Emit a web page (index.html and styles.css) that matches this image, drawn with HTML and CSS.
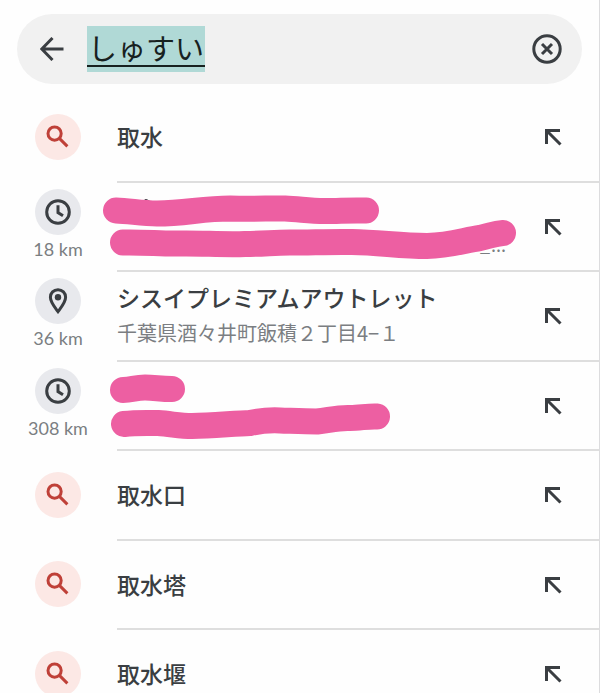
FILE: index.html
```
<!DOCTYPE html>
<html lang="ja">
<head>
<meta charset="UTF-8" />
<meta name="viewport" content="width=device-width, initial-scale=1" />
<title>しゅすい</title>
<link rel="stylesheet" href="styles.css">
</head>
<body>

<!-- shared icons -->
<svg class="sprite" aria-hidden="true">
  <symbol id="icon-search" viewBox="0 0 24 24">
    <circle cx="8.6" cy="8.6" r="6.6" />
    <path d="M13.4 13.4 L21.4 21.4" />
  </symbol>
  <symbol id="icon-clock" viewBox="0 0 26 26">
    <circle cx="13" cy="13" r="11.3" />
    <path d="M13 6.2 V13.6 L18 16.8" />
  </symbol>
  <symbol id="icon-pin" viewBox="0 0 26 26">
    <path d="M13 1.8 C8.6 1.8 5.4 5 5.4 9.3 C5.4 14.4 9.6 19 13 23.6 C16.4 19 20.6 14.4 20.6 9.3 C20.6 5 17.4 1.8 13 1.8 Z" />
    <circle class="dot" cx="13" cy="9.3" r="3.2" />
  </symbol>
  <symbol id="icon-fill" viewBox="0 0 18 18">
    <path d="M16 2.5 H2.5 V16 M2.5 2.5 L16.5 16.5" />
  </symbol>
</svg>

<header>
  <form class="search-bar">
    <button type="button" class="icon-btn" aria-label="戻る">
      <svg width="24" height="24" viewBox="0 0 24 24"><path d="M23.5 12 H2 M12.5 1 L1.8 12 L12.5 23" /></svg>
    </button>
    <div class="search-field">
      <input type="text" class="query" value="しゅすい" aria-label="検索" />
    </div>
    <button type="reset" class="icon-btn" aria-label="クリア">
      <svg width="30" height="30" viewBox="0 0 30 30"><circle cx="15" cy="15" r="13.2" /><path d="M10 10 L20 20 M20 10 L10 20" /></svg>
    </button>
  </form>
</header>

<main>
  <ul class="results">
    <li class="result">
      <div class="lead"><span class="badge search"><svg width="24" height="24"><use href="#icon-search" /></svg></span></div>
      <div class="content">
        <div class="text"><a href="#" class="name">取水</a></div>
        <button type="button" class="fill" aria-label="取水を入力"><svg width="18" height="18"><use href="#icon-fill" /></svg></button>
      </div>
    </li>
    <li class="result">
      <div class="lead">
        <span class="badge"><svg width="26" height="26"><use href="#icon-clock" /></svg></span>
        <span class="distance">18 km</span>
      </div>
      <div class="content">
        <div class="text">
          <svg class="marker" width="420" height="76" viewBox="100 189 420 76">
            <path class="trace" d="M146 202 L151 205" />
            <text x="480" y="253">_</text>
            <text x="491" y="253">...</text>
            <path d="M116 211.5 C130 212 142 214.5 157 214.5 C185 214.5 202 209.5 230 209.5 C250 210 265 209.5 285 209.5 C300 210 308 212 325 212 C340 212 348 211 366 211.5" />
            <path d="M123 243.5 C145 243 162 245 180 244.5 C200 244 225 246 245 245 C265 245 272 243.5 290 243.5 C310 243.5 335 242.5 352 243 C380 243.5 400 247 427 247 C450 246.5 465 241 480 239 C490 237 494 234.5 503 234" />
          </svg>
        </div>
        <button type="button" class="fill" aria-label="入力"><svg width="18" height="18"><use href="#icon-fill" /></svg></button>
      </div>
    </li>
    <li class="result">
      <div class="lead">
        <span class="badge"><svg width="26" height="26"><use href="#icon-pin" /></svg></span>
        <span class="distance">36 km</span>
      </div>
      <div class="content">
        <div class="text">
          <a href="#" class="name">シスイプレミアムアウトレット</a>
          <span class="address">千葉県酒々井町飯積２丁目4−１</span>
        </div>
        <button type="button" class="fill" aria-label="シスイプレミアムアウトレットを入力"><svg width="18" height="18"><use href="#icon-fill" /></svg></button>
      </div>
    </li>
    <li class="result">
      <div class="lead">
        <span class="badge"><svg width="26" height="26"><use href="#icon-clock" /></svg></span>
        <span class="distance">308 km</span>
      </div>
      <div class="content">
        <div class="text">
          <svg class="marker" width="420" height="76" viewBox="100 368 420 76">
            <path d="M123 391 C132 391 135 388.5 145 388.5 C155 388.5 160 390 172 390" />
            <path d="M124 425 C136 423.5 146 424 158 424 C172 425 180 427 192 427 C212 426.5 235 424.5 250 424 C262 421.5 270 421 280 421.5 C295 422 305 422.5 317 422.5 C330 421 338 418.5 350 419 C360 419 368 417 377 417.5" />
          </svg>
        </div>
        <button type="button" class="fill" aria-label="入力"><svg width="18" height="18"><use href="#icon-fill" /></svg></button>
      </div>
    </li>
    <li class="result">
      <div class="lead"><span class="badge search"><svg width="24" height="24"><use href="#icon-search" /></svg></span></div>
      <div class="content">
        <div class="text"><a href="#" class="name">取水口</a></div>
        <button type="button" class="fill" aria-label="取水口を入力"><svg width="18" height="18"><use href="#icon-fill" /></svg></button>
      </div>
    </li>
    <li class="result">
      <div class="lead"><span class="badge search"><svg width="24" height="24"><use href="#icon-search" /></svg></span></div>
      <div class="content">
        <div class="text"><a href="#" class="name">取水塔</a></div>
        <button type="button" class="fill" aria-label="取水塔を入力"><svg width="18" height="18"><use href="#icon-fill" /></svg></button>
      </div>
    </li>
    <li class="result">
      <div class="lead"><span class="badge search"><svg width="24" height="24"><use href="#icon-search" /></svg></span></div>
      <div class="content">
        <div class="text"><a href="#" class="name">取水堰</a></div>
        <button type="button" class="fill" aria-label="取水堰を入力"><svg width="18" height="18"><use href="#icon-fill" /></svg></button>
      </div>
    </li>
  </ul>
</main>

</body>
</html>
```
FILE: styles.css
```
* {
  box-sizing: border-box;
}
html {
  height: 100%;
  overflow: hidden;
}
body {
  margin: 0;
  height: 100%;
  overflow: hidden;
  background: #fefefe;
  border-right: 1px solid #dcdcde;
  color: #3a3e42;
  font-family: "Noto Sans CJK JP", sans-serif;
}
svg {
  display: block;
  fill: none;
  stroke: currentColor;
}
button {
  padding: 0;
  border: none;
  background: none;
  color: inherit;
  cursor: pointer;
}
.sprite {
  position: absolute;
  width: 0;
  height: 0;
}
.sprite .dot {
  fill: currentColor;
  stroke: none;
}

/* search bar */
header {
  padding: 14px 17px 9px;
}
.search-bar {
  display: flex;
  align-items: center;
  height: 70px;
  padding: 0 20px 0 23px;
  border-radius: 35px;
  background: #f1f1f1;
}
.icon-btn {
  stroke-width: 3px;
}
.search-field {
  flex: 1;
  padding-left: 23px;
}
.query {
  display: block;
  width: 118px;
  height: 46px;
  padding: 0 1px 4px;
  border: none;
  outline: none;
  background: linear-gradient(#17211f, #17211f) 0 39px / 100% 2px no-repeat #b0d9d6;
  color: #17211f;
  font-family: inherit;
  font-size: 29px;
}

/* suggestions */
.results {
  margin: 0;
  padding: 0;
  list-style: none;
}
.result {
  display: flex;
  height: 90px;
}
.result:nth-child(even) {
  height: 89px;
}
.lead {
  width: 117px;
  display: flex;
  flex-direction: column;
  align-items: center;
  justify-content: center;
  gap: 2px;
  padding: 0 1px 3px 0;
}
.badge {
  display: flex;
  align-items: center;
  justify-content: center;
  width: 46px;
  height: 46px;
  border-radius: 50%;
  background: #e8e9ed;
  stroke-width: 3px;
}
.badge.search {
  background: #fce8e5;
  color: #bf4038;
}
.distance {
  margin-bottom: 3px;
  color: #7b7e82;
  font-family: Lato, sans-serif;
  font-size: 18px;
  line-height: 24px;
}
.content {
  flex: 1;
  min-width: 0;
  display: flex;
  align-items: center;
  justify-content: space-between;
  padding-right: 37px;
  border-bottom: 2px solid #dedede;
}
.text {
  display: flex;
  flex-direction: column;
  padding-bottom: 2px;
  white-space: nowrap;
}
.name {
  color: inherit;
  font-size: 23px;
  font-weight: 500;
  line-height: 36px;
  text-decoration: none;
}
.address {
  color: #7b7e82;
  font-size: 20px;
  line-height: 36px;
}
.fill {
  stroke-width: 3px;
}

/* marker strokes over hidden entries */
.marker {
  margin-left: -17px;
  stroke: #ed5fa2;
  stroke-width: 26px;
  stroke-linecap: round;
  stroke-linejoin: round;
}
.marker .trace {
  stroke: #3a3e42;
  stroke-width: 4px;
}
.marker text {
  fill: #7b7e82;
  stroke: none;
  font-size: 18px;
}
```
